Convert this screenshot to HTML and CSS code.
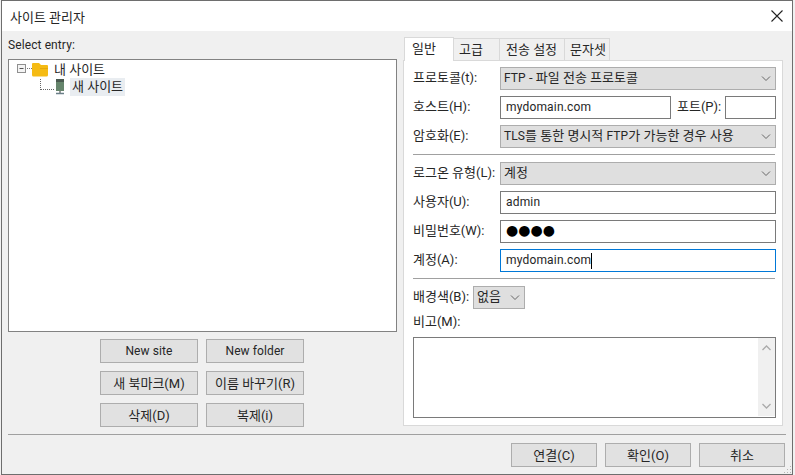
FILE: index.html
```html
<!DOCTYPE html>
<html lang="ko">
<head>
<meta charset="utf-8">
<title>사이트 관리자</title>
<link rel="stylesheet" href="styles.css">
</head>
<body>
<div class="window">
  <header class="titlebar">
    <span class="title">사이트 관리자</span>
    <svg class="close" width="12" height="12" viewBox="0 0 12 12"><path d="M.5.5l11 11M11.5.5l-11 11" stroke="#222" stroke-width="1.1" fill="none"/></svg>
  </header>
  <main class="content">
    <section class="left">
      <div class="entry-label lat">Select entry:</div>
      <div class="tree">
        <div class="tree-row">
          <svg class="tree-icons-a" width="32" height="18" viewBox="0 0 32 18">
            <rect x=".5" y="4.500" width="8" height="8" fill="#f4f4f4" stroke="#8f8f8f"/>
            <path d="M2.500 8.500h4" stroke="#555"/>
            <path d="M10 8.500h5" stroke="#777" stroke-dasharray="1 1"/>
            <path d="M15 4q0-1 1-1h6l2 2h6q1 0 1 1v9q0 1.500-1.500 1.500h-13q-1.500 0-1.500-1.500z" fill="#f5bb14"/>
            <path d="M23 8h8v1h-8z" fill="#e5a80c"/>
          </svg>
          <span class="node node-top">내 사이트</span>
        </div>
        <div class="tree-row">
          <svg class="tree-icons-b" width="47" height="19" viewBox="0 0 47 19">
            <path d="M23.500 1v11M24 11.500h13" stroke="#666" stroke-dasharray="1 1" fill="none"/>
            <rect x="39" y="1" width="8" height="12" fill="#66856c"/>
            <rect x="39" y="1" width="8" height="3" fill="#4a5a50"/>
            <path d="M43 13v2" stroke="#777" stroke-width="1.500"/>
            <path d="M39 15.500h8" stroke="#6b7f88" stroke-width="1.500"/>
          </svg>
          <span class="node selected">새 사이트</span>
        </div>
      </div>
      <div class="site-buttons">
        <button class="btn lat">New site</button>
        <button class="btn lat">New folder</button>
        <button class="btn">새 북마크(M)</button>
        <button class="btn">이름 바꾸기(R)</button>
        <button class="btn">삭제(D)</button>
        <button class="btn">복제(i)</button>
      </div>
    </section>
    <section class="right">
      <nav class="tabs">
        <span class="tab tab-active">일반</span>
        <span class="tab tab-w46">고급</span>
        <span class="tab tab-w65">전송 설정</span>
        <span class="tab tab-w45">문자셋</span>
      </nav>
      <div class="panel">
        <div class="row">
          <label class="lbl">프로토콜(t):</label>
          <div class="select grow"><span class="lat">FTP</span> - 파일 전송 프로토콜<svg class="chev" width="10" height="6" viewBox="0 0 10 6"><path d="M1 .5l4 4 4-4" stroke="#666" fill="none"/></svg></div>
        </div>
        <div class="row">
          <label class="lbl">호스트(H):</label>
          <div class="input host"><span class="val">mydomain.com</span></div>
          <label class="lbl-port">포트(P):</label>
          <div class="input port"></div>
        </div>
        <div class="row">
          <label class="lbl">암호화(E):</label>
          <div class="select grow"><span class="lat">TLS</span>를 통한 명시적 <span class="lat">FTP</span>가 가능한 경우 사용<svg class="chev" width="10" height="6" viewBox="0 0 10 6"><path d="M1 .5l4 4 4-4" stroke="#666" fill="none"/></svg></div>
        </div>
        <hr class="rule">
        <div class="row">
          <label class="lbl">로그온 유형(L):</label>
          <div class="select grow">계정<svg class="chev" width="10" height="6" viewBox="0 0 10 6"><path d="M1 .5l4 4 4-4" stroke="#666" fill="none"/></svg></div>
        </div>
        <div class="row">
          <label class="lbl">사용자(U):</label>
          <div class="input grow"><span class="val">admin</span></div>
        </div>
        <div class="row">
          <label class="lbl">비밀번호(W):</label>
          <div class="input grow dots">●●●●</div>
        </div>
        <div class="row">
          <label class="lbl">계정(A):</label>
          <div class="input grow focus"><span class="val">mydomain.com</span><span class="caret"></span></div>
        </div>
        <hr class="rule">
        <div class="row">
          <label class="lbl-bg">배경색(B):</label>
          <div class="select color">없음<svg class="chev" width="10" height="6" viewBox="0 0 10 6"><path d="M1 .5l4 4 4-4" stroke="#666" fill="none"/></svg></div>
        </div>
        <div class="memo-label">비고(M):</div>
        <div class="memo">
          <div class="scroll">
            <svg width="9" height="6" viewBox="0 0 9 6"><path d="M.5 5l4-4 4 4" stroke="#aaa" stroke-width="1.300" fill="none"/></svg>
            <svg width="9" height="6" viewBox="0 0 9 6"><path d="M.5 1l4 4 4-4" stroke="#aaa" stroke-width="1.300" fill="none"/></svg>
          </div>
        </div>
      </div>
    </section>
  </main>
  <footer class="footer">
    <button class="btn btn-foot">연결(C)</button>
    <button class="btn btn-foot">확인(O)</button>
    <button class="btn btn-foot">취소</button>
    <svg class="grip" width="8" height="8" viewBox="0 0 8 8"><path d="M6 0h1v1H6zM3 3h1v1H3zM6 3h1v1H6zM0 6h1v1H0zM3 6h1v1H3zM6 6h1v1H6z" fill="#b5b5b5"/></svg>
  </footer>
</div>
</body>
</html>
```
FILE: styles.css
```css
* { box-sizing: border-box; }
html, body { margin: 0; height: 100%; }
body {
  background: #f1f1f1;
  font-family: Roboto, "Noto Sans CJK KR", sans-serif;
  font-size: 13px;
  color: #262626;
  overflow: hidden;
}
.lat { font-size: 12px; letter-spacing: .1px; }
.val { font-size: 12px; letter-spacing: .17px; }
.window {
  width: 792px;
  height: 475px;
  border: 1px solid #6e6e6e;
  margin-left: 1px;
  background: #f0f0f0;
  display: flex;
  flex-direction: column;
}
.titlebar {
  height: 30px;
  flex: none;
  background: #fff;
  display: flex;
  align-items: center;
  justify-content: space-between;
  padding: 0 9px 0 8px;
}
.title { font-size: 13px; }
.content {
  flex: none;
  height: 404px;
  display: flex;
  border-bottom: 1px solid #a0a0a0;
  margin: 0 6px 0 6px;
  padding: 6px 0 0 0;
}
.left { width: 389px; flex: none; }
.entry-label { height: 22px; line-height: 16px; }
.tree {
  height: 273px;
  background: #fff;
  border: 1px solid #828282;
}
.tree-row { display: flex; align-items: flex-start; height: 18px; padding-left: 8px; }
.tree-icons-a { margin-right: 5px; }
.tree-icons-b { margin-right: 6px; }
.node { line-height: 18px; }
.node-top { padding-top: 1px; }
.selected { background: #e9edf1; padding: 0 2px; height: 18px; }
.site-buttons {
  display: grid;
  grid-template-columns: 98px 98px;
  grid-auto-rows: 24px;
  gap: 8px;
  justify-content: start;
  margin: 7px 0 0 92px;
}
.btn {
  background: #e1e1e1;
  border: 1px solid #adadad;
  font-family: inherit;
  font-size: 13px;
  color: #262626;
  padding: 0 0 2px;
  height: 24px;
}
.btn.lat { font-size: 12px; padding-bottom: 0; }
.right { width: 380px; margin-left: 6px; flex: none; }
.tabs { display: flex; height: 23px; align-items: flex-end; margin-left: 1px; }
.tab {
  height: 22px;
  background: #f0f0f0;
  border: 1px solid #d9d9d9;
  border-bottom: 0;
  display: flex;
  align-items: center;
  justify-content: flex-start;
  margin-left: -1px;
  padding: 0 0 2px 6px;
}
.tab-active {
  width: 50px;
  height: 24px;
  margin-left: 0;
  background: #fff;
  padding: 0 0 4px 7px;
  position: relative;
  top: 1px;
  z-index: 1;
}
.tab-w46 { width: 47px; padding-left: 5px; }
.tab-w65 { width: 66px; }
.tab-w45 { width: 46px; padding-left: 5px; }
.panel {
  height: 366px;
  background: #fff;
  border: 1px solid #d9d9d9;
  padding: 6px 6px 0 9px;
}
.row { display: flex; align-items: center; height: 23px; margin-bottom: 6px; }
.lbl { width: 87px; flex: none; padding-bottom: 4px; }
.lbl-bg { width: 60px; flex: none; padding-bottom: 4px; }
.lbl-port { width: 54px; flex: none; padding: 0 0 4px 6px; }
.grow { flex: 1; }
.select {
  height: 23px;
  background: #dfdfdf;
  border: 1px solid #adadad;
  padding: 0 3px;
  line-height: 19px;
  position: relative;
}
.chev { position: absolute; right: 4px; top: 8px; }
.color { width: 52px; flex: none; }
.input {
  height: 23px;
  background: #fff;
  border: 1px solid #7a7a7a;
  padding: 0 5px;
  line-height: 20px;
}
.host { width: 171px; flex: none; }
.port { width: 51px; flex: none; }
.dots { font-family: "DejaVu Sans", sans-serif; font-size: 14px; color: #000; line-height: 18px; }
.focus { border-color: #0078d7; }
.caret { display: inline-block; width: 1px; height: 16px; background: #000; vertical-align: middle; }
.rule { border: 0; border-top: 1px solid #a0a0a0; margin: 0 0 7px 0; width: 362px; }
.memo-label { height: 22px; line-height: 14px; }
.memo {
  width: 363px;
  height: 81px;
  border: 1px solid #7a7a7a;
  display: flex;
  justify-content: flex-end;
}
.scroll {
  width: 17px;
  background: #f0f0f0;
  display: flex;
  flex-direction: column;
  justify-content: space-between;
  align-items: center;
  padding: 7px 0;
  margin-bottom: 1px;
}
.footer {
  flex: 1;
  display: flex;
  justify-content: flex-end;
  gap: 8px;
  padding: 8px 7px 0 0;
  position: relative;
}
.btn-foot { width: 86px; }
.grip { position: absolute; right: 0; bottom: 0; }
```
